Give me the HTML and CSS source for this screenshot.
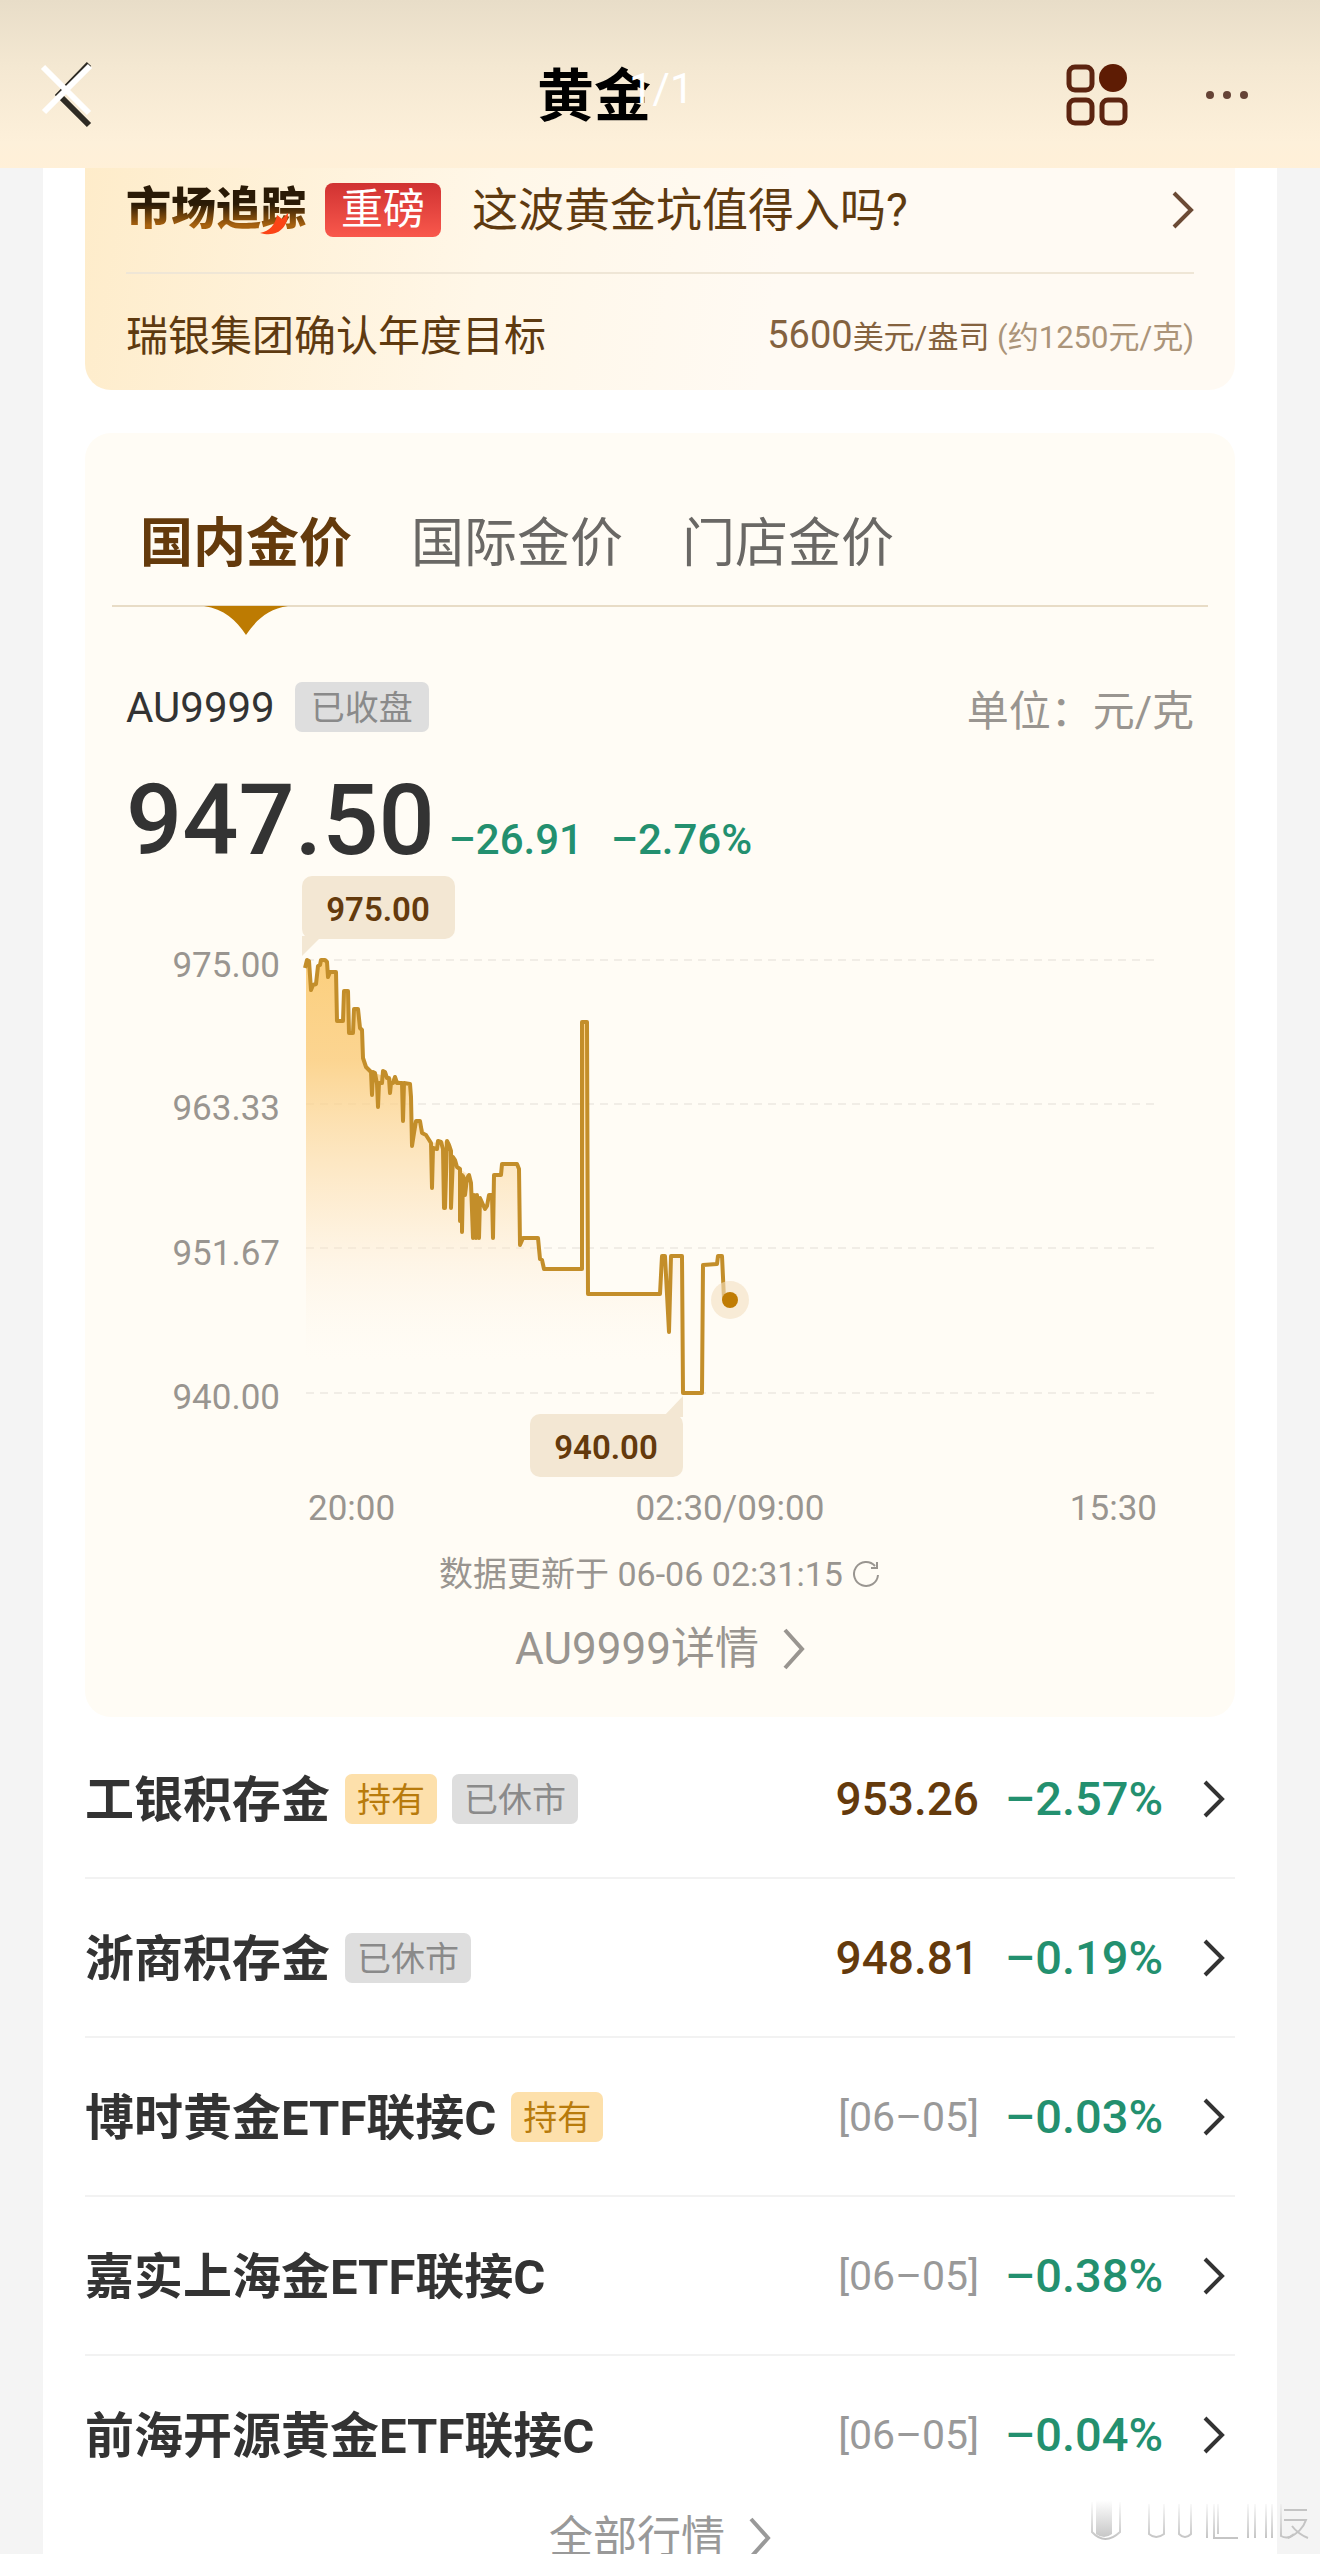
FILE: index.html
```html
<!DOCTYPE html>
<html lang="zh-CN">
<head>
    <meta charset="UTF-8">
    <meta name="viewport" content="width=device-width, initial-scale=1.0">
    <title>黄金</title>
    <link rel="stylesheet" href="styles.css">
</head>
<body>
    <header class="topbar">
        <button type="button" class="icon-btn" aria-label="关闭">
            <svg width="56" height="68" viewBox="0 0 56 68">
                <path d="M49 3 L19 34 L49 64" fill="none" stroke="#2e2b24" stroke-width="6"/>
                <path d="M3 6 L49 52 M50 5 L4 51" fill="none" stroke="#fff" stroke-width="6"/>
            </svg>
        </button>
        <h1>黄金<span class="pager">1/1</span></h1>
        <div class="topbar-actions">
            <button type="button" class="icon-btn" aria-label="全部功能">
                <svg width="62" height="62" viewBox="0 0 62 62" fill="none" stroke="#5c2410" stroke-width="5">
                    <rect x="3" y="3" width="23" height="23" rx="6"/>
                    <circle cx="47" cy="14" r="14" fill="#5e1c04" stroke="none"/>
                    <rect x="3" y="36" width="23" height="23" rx="6"/>
                    <rect x="36" y="36" width="23" height="23" rx="6"/>
                </svg>
            </button>
            <button type="button" class="icon-btn" aria-label="更多">
                <svg width="46" height="12" viewBox="0 0 46 12" fill="#654336">
                    <circle cx="6" cy="6" r="4"/>
                    <circle cx="23" cy="6" r="4"/>
                    <circle cx="40" cy="6" r="4"/>
                </svg>
            </button>
        </div>
    </header>

    <main class="container">
        <section class="news">
            <a href="#" class="news-title">
                <span class="brand"><span class="brand-text">市场追踪</span>
                    <svg class="swoosh" width="28" height="24" viewBox="0 0 28 24"><path d="M0 22 C10 20 15 14 17 4 L22 8 L28 2 C28 16 18 27 0 22 Z" fill="#fb4416"/></svg>
                </span>
                <span class="hot">重磅</span>
                <span class="headline">这波黄金坑值得入吗?</span>
                <svg class="chevron" width="22" height="38" viewBox="0 0 22 38"><path d="M2 2 L19 19 L2 36"/></svg>
            </a>
            <div class="news-row">
                <span>瑞银集团确认年度目标</span>
                <span class="target"><b>5600</b>美元/盎司 <small>(约1250元/克)</small></span>
            </div>
        </section>

        <section class="quote">
            <nav class="tabs">
                <button type="button" class="tab active">国内金价
                    <svg class="pointer" width="84" height="29" viewBox="0 0 84 29"><path d="M0 0 H84 C64 3 52 14 42 29 C32 14 20 3 0 0 Z" fill="#bd7b02"/></svg>
                </button>
                <button type="button" class="tab">国际金价</button>
                <button type="button" class="tab">门店金价</button>
            </nav>

            <div class="quote-head">
                <span class="code">AU9999</span>
                <span class="tag closed wide">已收盘</span>
                <span class="unit">单位：元/克</span>
            </div>
            <div class="quote-price">
                <strong>947.50</strong>
                <span>–26.91</span>
                <span>–2.76%</span>
            </div>

            <svg class="chart" viewBox="0 0 1096 660" role="img" aria-label="AU9999 走势">
                <defs>
                    <linearGradient id="area" gradientUnits="userSpaceOnUse" x1="0" y1="0" x2="0" y2="400">
                        <stop offset="0" stop-color="#fbc768" stop-opacity="0.85"/>
                        <stop offset="0.25" stop-color="#fbcb78" stop-opacity="0.8"/>
                        <stop offset="0.6" stop-color="#fce0b4" stop-opacity="0.55"/>
                        <stop offset="1" stop-color="#fdf3ea" stop-opacity="0"/>
                    </linearGradient>
                </defs>
                <g class="y-labels">
                    <text x="168" y="107">975.00</text>
                    <text x="168" y="250">963.33</text>
                    <text x="168" y="395">951.67</text>
                    <text x="168" y="539">940.00</text>
                </g>
                <g transform="translate(194 90)">
                    <path class="grid" d="M0 0 H851 M0 144 H851 M0 288 H851 M0 433 H851"/>
                    <path fill="url(#area)" d="M0 400 L0 8 L1 0 L3 1 L5 30 L7 25 L10 24 L12 6 L15 0 L19 0 L22 17 L24 12 L30 12 L31 61 L37 61 L38 31 L42 31 L43 73 L47 73 L48 49 L52 49 L54 68 L57 98 L60 107 L65 112 L104 124 L106 186 L110 161 L114 161 L120 175 L125 183 L141 181 L154 209 L163 215 L168 235 L179 249 L186 235 L188 215 L195 215 L196 204 L211 204 L214 285 L217 278 L232 278 L234 299 L238 309 L276 309 L276 62 L281 62 L282 334 L354 334 L356 296 L359 296 L363 372 L365 296 L376 296 L377 400 Z"/>
                    <path class="line" d="M-1 8 L1 0 L3 1 L5 30 L7 25 L10 24 L12 6 L14 5 L15 0 L19 0 L21 2 L22 17 L24 12 L30 12 L31 61 L37 61 L38 31 L42 31 L43 73 L47 73 L48 49 L52 49 L54 68 L56 70 L57 98 L60 107 L65 112 L66 135 L67 112 L69 113 L71 124 L72 147 L73 123 L76 123 L77 111 L79 112 L81 118 L83 118 L84 133 L85 123 L87 123 L89 117 L91 123 L96 123 L97 161 L98 123 L104 124 L105 137 L106 186 L108 173 L110 161 L114 161 L116 173 L120 175 L125 183 L126 228 L127 188 L131 189 L132 181 L135 182 L137 189 L138 248 L139 248 L141 181 L143 185 L145 191 L145 248 L147 197 L149 200 L151 207 L154 209 L154 261 L156 215 L156 272 L157 216 L159 235 L161 218 L163 215 L165 223 L167 278 L168 235 L170 278 L171 235 L173 278 L174 238 L179 249 L181 246 L183 235 L186 235 L187 278 L188 215 L195 215 L196 204 L211 204 L213 209 L214 285 L217 278 L232 278 L234 299 L236 300 L238 309 L276 309 L276 62 L281 62 L282 334 L354 334 L356 296 L359 296 L363 372 L365 296 L376 296 L377 433 L396 433 L397 305 L411 304 L412 296 L416 296 L418 339 L424 340"/>
                    <circle cx="424" cy="340" r="19" fill="#f3dfc2" fill-opacity="0.6"/>
                    <circle cx="424" cy="340" r="8" fill="#c07c04"/>
                    <g class="callout">
                        <rect x="-4" y="-84" width="153" height="63" rx="10"/>
                        <path d="M-4 -24 H16 L-4 -4 Z"/>
                        <text x="72" y="-39">975.00</text>
                    </g>
                    <g class="callout">
                        <rect x="224" y="454" width="153" height="63" rx="10"/>
                        <path d="M377 457 H357 L377 436 Z"/>
                        <text x="300" y="499">940.00</text>
                    </g>
                </g>
                <g class="x-labels">
                    <text x="196" y="650">20:00</text>
                    <text x="618" y="650" text-anchor="middle">02:30/09:00</text>
                    <text x="1045" y="650" text-anchor="end">15:30</text>
                </g>
            </svg>

            <p class="updated">数据更新于 06-06 02:31:15
                <svg width="28" height="28" viewBox="0 0 28 28" fill="none" stroke="#999590" stroke-width="2"><path d="M25 15 A12 12 0 1 1 22 6 M24 2 V8 H18"/></svg>
            </p>
            <a href="#" class="more">AU9999详情
                <svg class="chevron" width="22" height="42" viewBox="0 0 22 42"><path d="M2 2 L19 21 L2 40"/></svg>
            </a>
        </section>

        <ul class="funds">
            <li>
                <a href="#">
                    <span class="name">工银积存金</span>
                    <span class="tag held">持有</span>
                    <span class="tag closed">已休市</span>
                    <span class="price">953.26</span>
                    <span class="change">–2.57%</span>
                    <svg class="chevron" width="22" height="38" viewBox="0 0 22 38"><path d="M2 2 L19 19 L2 36"/></svg>
                </a>
            </li>
            <li>
                <a href="#">
                    <span class="name">浙商积存金</span>
                    <span class="tag closed">已休市</span>
                    <span class="price">948.81</span>
                    <span class="change">–0.19%</span>
                    <svg class="chevron" width="22" height="38" viewBox="0 0 22 38"><path d="M2 2 L19 19 L2 36"/></svg>
                </a>
            </li>
            <li>
                <a href="#">
                    <span class="name">博时黄金ETF联接C</span>
                    <span class="tag held">持有</span>
                    <span class="price date">[06–05]</span>
                    <span class="change">–0.03%</span>
                    <svg class="chevron" width="22" height="38" viewBox="0 0 22 38"><path d="M2 2 L19 19 L2 36"/></svg>
                </a>
            </li>
            <li>
                <a href="#">
                    <span class="name">嘉实上海金ETF联接C</span>
                    <span class="price date">[06–05]</span>
                    <span class="change">–0.38%</span>
                    <svg class="chevron" width="22" height="38" viewBox="0 0 22 38"><path d="M2 2 L19 19 L2 36"/></svg>
                </a>
            </li>
            <li>
                <a href="#">
                    <span class="name">前海开源黄金ETF联接C</span>
                    <span class="price date">[06–05]</span>
                    <span class="change">–0.04%</span>
                    <svg class="chevron" width="22" height="38" viewBox="0 0 22 38"><path d="M2 2 L19 19 L2 36"/></svg>
                </a>
            </li>
        </ul>
        <a href="#" class="more all">全部行情
            <svg class="chevron" width="22" height="42" viewBox="0 0 22 42"><path d="M2 2 L19 21 L2 40"/></svg>
        </a>
    </main>

    <!-- faded watermark in the corner -->
    <svg class="watermark" width="226" height="44" viewBox="0 0 226 44" fill="none">
        <defs>
            <linearGradient id="fade" gradientUnits="userSpaceOnUse" x1="0" y1="0" x2="0" y2="40">
                <stop offset="0" stop-color="#bbb" stop-opacity="0"/>
                <stop offset="1" stop-color="#bbb" stop-opacity="0.9"/>
            </linearGradient>
        </defs>
        <path d="M8 0 H24 V34 Q16 40 8 34 Z" fill="url(#fade)"/>
        <path d="M4 2 V32 Q17 46 32 32 V2" stroke="url(#fade)" stroke-width="2"/>
        <path d="M61 4 V34 Q68 40 76 34 V4 M91 4 V34 Q97 40 103 34 V4 M119 4 V38 M126 4 V38 H150 M130 4 V34 M160 4 V38 M167 4 V38 M178 4 V38 M184 4 V38 M193 4 V36 Q200 40 206 34" stroke="url(#fade)" stroke-width="2"/>
        <path d="M196 10 H219 M196 20 H218 Q214 32 200 38 M204 26 Q210 34 220 38" stroke="#c4c4c4" stroke-width="2"/>
    </svg>
</body>
</html>
```

FILE: styles.css
```css
* {
    box-sizing: border-box;
}
body {
    display: flex;
    flex-direction: column;
    height: 100vh;
    margin: 0;
    overflow: hidden;
    position: relative;
    background-color: #f4f4f4;
    color: #333;
    font-family: Roboto, "Noto Sans CJK SC", sans-serif;
}
a {
    color: inherit;
    text-decoration: none;
}
button {
    padding: 0;
    border: none;
    background: none;
    font-family: inherit;
    color: inherit;
    cursor: pointer;
}
svg {
    display: block;
    flex-shrink: 0;
}
.chevron path {
    fill: none;
    stroke: currentColor;
    stroke-width: 4;
}

/* top bar */
.topbar {
    display: grid;
    grid-template-columns: 1fr auto 1fr;
    align-items: center;
    flex-shrink: 0;
    height: 168px;
    padding: 22px 70px 0 40px;
    background: linear-gradient(#e8ddc8, #f4e8d2 40%, #fdf0da 85%, #fff0d8);
}
.topbar h1 {
    position: relative;
    margin: 0 102px 0 0;
    padding-top: 4px;
    font-size: 57px;
    line-height: 68px;
    color: #000;
}
.pager {
    position: absolute;
    left: 92px;
    top: -4px;
    font-size: 42px;
    font-weight: 400;
    color: #fff;
}
.topbar-actions {
    display: flex;
    align-items: center;
    justify-content: flex-end;
    gap: 76px;
}

/* white sheet */
.container {
    flex-shrink: 0;
    margin: 0 43px;
    padding: 0 42px;
    background-color: #fff;
}

/* news card */
.news {
    height: 222px;
    padding: 0 41px;
    border-radius: 0 0 26px 26px;
    background: linear-gradient(100deg, #feecca, #fff7e8 35%, #fffaf3 60%);
    color: #5e3a10;
}
.news-title {
    display: flex;
    align-items: center;
    height: 106px;
    padding-bottom: 20px;
    border-bottom: 2px solid #efe6d6;
    font-size: 46px;
    line-height: 54px;
}
.brand {
    position: relative;
    font-size: 45px;
    font-weight: 900;
}
.brand-text {
    background: linear-gradient(#2a1a06 40%, #a8620f 80%);
    background-clip: text;
    -webkit-background-clip: text;
    color: transparent;
}
.swoosh {
    position: absolute;
    right: 18px;
    bottom: 2px;
}
.hot {
    margin: 0 31px 0 19px;
    padding: 0 16px;
    border-radius: 8px;
    background: linear-gradient(#d03232, #f9584c);
    color: #fff;
    font-size: 42px;
    line-height: 54px;
}
.news .chevron {
    margin-left: auto;
    color: #6b4a35;
}
.news-row {
    display: flex;
    align-items: center;
    justify-content: space-between;
    height: 116px;
    font-size: 42px;
}
.target {
    padding-top: 4px;
    color: #84623f;
    font-size: 31px;
}
.target b {
    font-size: 38px;
    font-weight: 400;
}
.target small {
    color: #ab9479;
    font-size: 31px;
}

/* quote card */
.quote {
    margin-top: 43px;
    padding: 0 27px 43px;
    border-radius: 26px;
    background-color: #fffcf5;
}
.tabs {
    display: flex;
    gap: 59px;
    height: 174px;
    padding: 40px 28px 0;
    border-bottom: 2px solid #e8dcc6;
}
.tab {
    position: relative;
    color: #6a6865;
    font-size: 53px;
}
.tab.active {
    color: #643a0c;
    font-weight: 700;
}
.pointer {
    position: absolute;
    left: 64px;
    top: 133px;
}
.quote-head {
    display: flex;
    align-items: center;
    height: 50px;
    margin: 75px 14px 0;
    font-size: 42px;
}
.code {
    margin-right: 20px;
}
.unit {
    margin-left: auto;
    color: #999590;
}
.tag {
    padding: 2px 12px 0;
    border-radius: 7px;
    font-size: 34px;
    line-height: 48px;
}
.tag.wide {
    padding: 2px 16px 0;
}
.tag.closed {
    background-color: #dedede;
    color: #8a8a8a;
}
.tag.held {
    background-color: #fde0ab;
    color: #b87b0c;
}
.quote-price {
    display: flex;
    align-items: baseline;
    gap: 28px;
    height: 100px;
    margin: 36px 14px 2px;
    color: #23906f;
    font-size: 42px;
    font-weight: 500;
}
.quote-price strong {
    margin-right: -14px;
    color: #333;
    font-size: 99px;
    font-weight: 500;
    line-height: 104px;
}
.chart {
    width: 100%;
}
.chart text {
    fill: #999590;
    font-size: 35px;
}
.y-labels {
    text-anchor: end;
}
.grid {
    stroke: #f1ede6;
    stroke-width: 2;
    stroke-dasharray: 8 6;
}
.line {
    fill: none;
    stroke: #c38e2a;
    stroke-width: 4;
    stroke-linejoin: round;
}
.callout {
    fill: #f3e7d3;
}
.chart .callout text {
    fill: #643a0c;
    font-size: 33px;
    font-weight: 600;
    text-anchor: middle;
}
.updated {
    display: flex;
    align-items: center;
    justify-content: center;
    gap: 10px;
    margin: 24px 0 30px;
    color: #999590;
    font-size: 34px;
    line-height: 40px;
}
.more {
    display: flex;
    align-items: center;
    justify-content: center;
    gap: 24px;
    color: #999590;
    font-size: 44px;
    line-height: 50px;
}

/* fund list */
.funds {
    margin: 3px 0 0;
    padding: 0;
    list-style: none;
}
.funds li {
    border-bottom: 2px solid #f2f2f2;
}
.funds li:last-child {
    border-bottom: none;
}
.funds a {
    display: flex;
    align-items: center;
    height: 157px;
    padding-right: 10px;
}
.name {
    padding-bottom: 6px;
    font-size: 49px;
    font-weight: 700;
}
.funds .tag {
    margin-left: 15px;
}
.price {
    margin-left: auto;
    color: #643a0c;
    font-size: 46px;
    font-weight: 500;
}
.price.date {
    color: #999;
    font-size: 41px;
    font-weight: 400;
}
.change {
    margin: 0 40px 0 26px;
    color: #23906f;
    font-size: 47px;
    font-weight: 500;
}
.more.all {
    color: #999;
}
.watermark {
    position: absolute;
    right: 6px;
    bottom: 10px;
}
```
